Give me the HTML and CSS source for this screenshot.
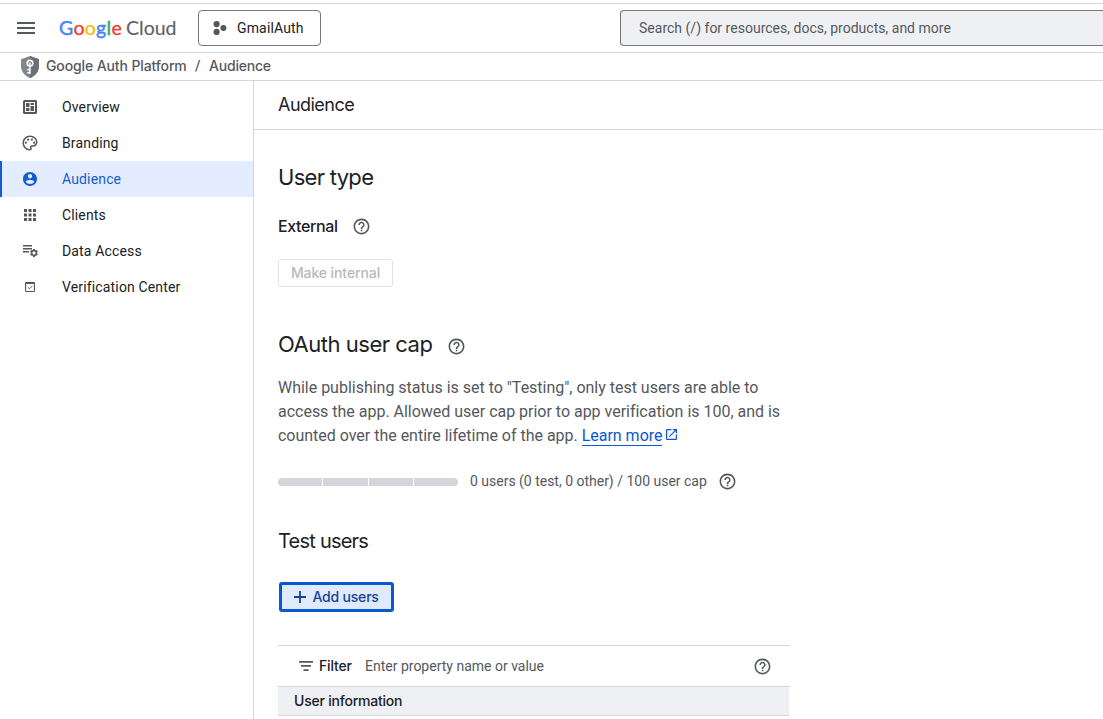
FILE: index.html
```html
<!DOCTYPE html>
<html lang="en">
<head>
<meta charset="utf-8">
<title>Audience – Google Auth Platform</title>
<link rel="stylesheet" href="styles.css">
</head>
<body>
<svg class="defs" width="0" height="0" aria-hidden="true">
  <symbol id="help" viewBox="0 0 24 24"><path d="M11 18h2v-2h-2v2zm1-16C6.48 2 2 6.48 2 12s4.48 10 10 10 10-4.48 10-10S17.52 2 12 2zm0 18c-4.41 0-8-3.59-8-8s3.59-8 8-8 8 3.59 8 8-3.59 8-8 8zm0-14c-2.21 0-4 1.79-4 4h2c0-1.1.9-2 2-2s2 .9 2 2c0 2-3 1.75-3 5h2c0-2.25 3-2.5 3-5 0-2.21-1.79-4-4-4z"/></symbol>
</svg>
<header class="topbar">
  <svg class="menu" viewBox="0 0 18 12"><path d="M0 0h18v2H0zM0 5h18v2H0zM0 10h18v2H0z"/></svg>
  <div class="logo"><span class="google"><span class="blue">G</span><span class="red">o</span><span class="yellow">o</span><span class="blue">g</span><span class="green">l</span><span class="red">e</span></span><span class="cloud">Cloud</span></div>
  <button class="project"><svg viewBox="0 0 14 14"><circle cx="3.6" cy="3.1" r="3.1"/><circle cx="3.6" cy="10.9" r="3.1"/><circle cx="10.4" cy="7" r="3"/></svg><span>GmailAuth</span></button>
  <div class="search"><span>Search (/) for resources, docs, products, and more</span></div>
</header>
<nav class="crumbs">
  <svg class="shield" viewBox="0 0 18 22"><path fill="#80868b" d="M9 0 18 3.3V10c0 5.4-3.7 10-9 12-5.3-2-9-6.6-9-12V3.3z"/><path fill="#6a7075" d="M9 0 18 3.3V10c0 5.4-3.7 10-9 12z"/><circle cx="9" cy="7.2" r="2.8" fill="none" stroke="#fff" stroke-width="1.6"/><path fill="#fff" d="M8.3 6.5h1.4V18H8.3zM6.3 13h2.5v1.4H6.3zM6.3 15.9h2.5v1.5H6.3z"/></svg>
  <span class="crumb-product">Google Auth Platform</span><span class="slash">/</span><span class="crumb-page">Audience</span>
</nav>
<div class="shell">
  <aside class="sidebar">
    <a class="item"><svg viewBox="0 0 16 16"><path fill-rule="evenodd" d="M2.5 1h11A1.5 1.5 0 0 1 15 2.5v11a1.5 1.5 0 0 1-1.5 1.5h-11A1.5 1.5 0 0 1 1 13.500v-11A1.500 1.500 0 0 1 2.500 1zM3 3v10h10V3z"/><path d="M4 4h3.500v4H4zM8.500 4H12v2H8.500zM8.500 7H12v5H8.500zM4 9h3.500v3H4z"/></svg>Overview</a>
    <a class="item"><svg viewBox="1.300 1.300 21.400 21.400"><path d="M12 22C6.490 22 2 17.510 2 12S6.490 2 12 2s10 4.040 10 9c0 3.310-2.690 6-6 6h-1.770c-.28 0-.5.22-.5.5 0 .12.05.23.13.33.41.47.64 1.060.64 1.670A2.500 2.500 0 0 1 12 22zm0-18c-4.410 0-8 3.590-8 8s3.590 8 8 8c.28 0 .5-.22.5-.5a.54.54 0 0 0-.14-.35c-.41-.46-.63-1.050-.63-1.650a2.500 2.500 0 0 1 2.500-2.500H16c2.210 0 4-1.790 4-4 0-3.860-3.590-7-8-7z"/><circle cx="6.500" cy="11.500" r="1.500"/><circle cx="9.500" cy="7.500" r="1.500"/><circle cx="14.500" cy="7.500" r="1.500"/><circle cx="17.500" cy="11.500" r="1.500"/></svg>Branding</a>
    <a class="item active"><svg viewBox="0.600 0.600 22.800 22.800"><path d="M12 2C6.480 2 2 6.480 2 12s4.480 10 10 10 10-4.480 10-10S17.520 2 12 2zm0 3c1.660 0 3 1.340 3 3s-1.340 3-3 3-3-1.340-3-3 1.340-3 3-3zm0 14.200c-2.500 0-4.710-1.280-6-3.220.03-1.990 4-3.080 6-3.080 1.990 0 5.970 1.090 6 3.080-1.290 1.940-3.500 3.220-6 3.220z"/></svg>Audience</a>
    <a class="item"><svg viewBox="0 0 16 16"><path d="M2 2h3v3H2zM6.500 2h3v3h-3zM11 2h3v3h-3zM2 6.500h3v3H2zM6.500 6.500h3v3h-3zM11 6.500h3v3h-3zM2 11h3v3H2zM6.500 11h3v3h-3zM11 11h3v3h-3z"/></svg>Clients</a>
    <a class="item"><svg viewBox="0 0 16 16"><path d="M1 2h9v1.500H1zM1 5h9v1.500H1zM1 8h6v1.500H1z"/><circle cx="12" cy="9.900" r="2.400" fill="none" stroke="#54585d" stroke-width="1.700"/><path fill="none" stroke="#54585d" stroke-width="1.900" d="M12 5.900v1.400M12 12.500v1.400M8.600 7.900l1.100.6M14.300 11.300l1.100.6M8.600 11.900l1.100-.6M14.300 8.500l1.100-.6"/></svg>Data Access</a>
    <a class="item"><svg viewBox="0 0 16 16"><path fill-rule="evenodd" d="M4 3h8a1 1 0 0 1 1 1v8a1 1 0 0 1-1 1H4a1 1 0 0 1-1-1V4a1 1 0 0 1 1-1zM4.100 5v6.900h7.800V5z"/><path fill="none" stroke="#54585d" d="m5.800 8.300 1.600 1.500L10.400 6.800"/></svg>Verification Center</a>
  </aside>
  <main class="main">
    <h1 class="page-title"><span>Audience</span></h1>
    <section class="content">
      <h2 class="user-type"><span>User type</span></h2>
      <div class="external"><span>External</span><svg class="help"><use href="#help"/></svg></div>
      <button class="internal" disabled><span>Make internal</span></button>
      <h2 class="cap"><span>OAuth user cap</span><svg class="help"><use href="#help"/></svg></h2>
      <p class="copy">While publishing status is set to "Testing", only test users are able to<br>access the app. Allowed user cap prior to app verification is 100, and is<br>counted over the entire lifetime of the app. <a class="learn">Learn more</a><svg class="ext" viewBox="3 3 18 18"><path d="M19 19H5V5h7V3H5a2 2 0 0 0-2 2v14a2 2 0 0 0 2 2h14c1.100 0 2-.9 2-2v-7h-2v7zM14 3v2h3.590l-9.830 9.830 1.410 1.410L19 6.410V10h2V3h-7z"/></svg></p>
      <div class="usage"><div class="meter"><i></i><i></i><i></i><i></i></div><span>0 users (0 test, 0 other) / 100 user cap</span><svg class="help"><use href="#help"/></svg></div>
      <h3 class="test"><span>Test users</span></h3>
      <button class="add"><svg viewBox="0 0 12 12"><path d="M5.100 0h1.800v5.100H12v1.800H6.900V12H5.100V6.900H0V5.100h5.100z"/></svg><span>Add users</span></button>
      <div class="table">
        <div class="filter"><svg class="filter-icon" viewBox="0 0 14 10"><path d="M0 0h14v1.700H0zM2 4.100h10v1.700H2zM4.500 8.200h5v1.700h-5z"/></svg><span class="filter-label">Filter</span><span class="hint">Enter property name or value</span><svg class="help"><use href="#help"/></svg></div>
        <div class="thead"><span>User information</span></div>
      </div>
    </section>
  </main>
</div>
</body>
</html>
```
FILE: styles.css
```css
* { box-sizing: border-box; }
body { margin: 0; height: 719px; overflow: hidden; background: #fff; color: #202124; font: 14px/20px Roboto, sans-serif; }
svg { display: block; flex: none; fill: #54585d; }
h1, h2, h3, p { margin: 0; font-weight: 400; }
button { margin: 0; font: inherit; }
.defs { display: none; }
.topbar { margin-top: 3px; height: 50px; border-top: 1px solid #d5d6dc; border-bottom: 1px solid #d5d6dc; display: flex; align-items: center; padding-left: 17px; overflow: hidden; }
.menu { width: 18px; height: 12px; margin-right: 24px; }
.logo { width: 139px; display: flex; gap: 5px; font: 19.5px/28px Lato, sans-serif; color: #5f6368; white-space: nowrap; }
.google { width: 63px; font-weight: 400; letter-spacing: .3px; -webkit-text-stroke: .4px currentColor; }
.cloud { margin-left: -1px; -webkit-text-stroke: .15px currentColor; }
.blue { color: #4285f4; }
.red { color: #ea4335; }
.yellow { color: #fbbc04; }
.green { color: #34a853; }
.project { width: 123px; height: 36px; border: 1px solid #74777f; border-radius: 4px; background: #fff; color: #202124; display: flex; align-items: center; gap: 10px; padding: 0 0 0 14px; letter-spacing: .15px; }
.project svg { width: 14px; height: 14px; }
.search { margin-left: 299px; flex: 1; height: 36px; border: 1px solid #74777f; border-right: 0; border-radius: 4px 0 0 4px; background: #eff0f3; color: #54585d; display: flex; align-items: center; padding-left: 18px; letter-spacing: .01px; white-space: nowrap; }
.crumbs { height: 28px; border-bottom: 1px solid #d5d6dc; display: flex; align-items: center; padding: 0 0 2px 21px; color: #54585d; font: 500 14px/20px Inter, sans-serif; }
.shield { width: 18px; height: 22px; margin: 2px 7px 0 0; }
.crumb-product { width: 149px; letter-spacing: -.12px; }
.slash { width: 14px; font-family: Roboto, sans-serif; }
.crumb-page { letter-spacing: -.2px; }
.shell { display: flex; height: 638px; }
.sidebar { width: 254px; flex: none; border-right: 1px solid #d5d6dc; padding-top: 8px; }
.item { display: flex; align-items: center; height: 36px; padding-left: 22px; gap: 24px; letter-spacing: .15px; }
.item svg { width: 16px; height: 16px; }
.active { background: #e4edff; color: #175bd2; border-left: 2px solid #175bd2; padding-left: 20px; }
.active svg { fill: #175bd2; }
.main { flex: 1; font-family: Roboto, sans-serif; }
.page-title { height: 49px; border-bottom: 1px solid #d5d6dc; padding: 12px 24px; font: 400 18px/24px Inter, sans-serif; letter-spacing: -.53px; }
.content { width: 536px; padding: 31px 0 0 24px; }
.help { width: 19px; height: 19px; }
.user-type { height: 32px; font: 400 22px/32px Inter, sans-serif; letter-spacing: -.7px; }
.external { margin-top: 20px; height: 26px; display: flex; align-items: center; gap: 14px; font: 500 16px/26px Inter, sans-serif; letter-spacing: -.38px; }
.internal { display: block; margin-top: 20px; width: 115px; height: 28px; padding: 0; border: 1px solid #e3e3e3; border-radius: 3px; background: #fff; color: #b8b9bb; font: 500 14px/26px Inter, sans-serif; letter-spacing: -.1px; }
.cap { margin-top: 41px; height: 32px; display: flex; align-items: center; gap: 15px; font: 400 22px/32px Inter, sans-serif; letter-spacing: -.48px; }
.cap .help { margin-top: 5px; }
.copy { margin-top: 16px; font-size: 16px; line-height: 24px; color: #54585d; letter-spacing: -.015px; white-space: nowrap; }
.learn { color: #0b57d0; border-bottom: 1px solid #0b57d0; }
.ext { display: inline-block; width: 11px; height: 11px; margin-left: 4px; fill: #0b57d0; vertical-align: 1px; }
.usage { margin-top: 23px; height: 20px; display: flex; align-items: center; color: #54585d; letter-spacing: -.01px; }
.meter { width: 180px; height: 8px; margin: 2px 12px 0 0; display: flex; gap: 1px; border-radius: 4px; overflow: hidden; }
.meter i { flex: 1; background: #d5d6dc; }
.usage span { width: 247.5px; white-space: nowrap; }
.test { margin-top: 36px; height: 28px; font: 400 20px/28px Inter, sans-serif; letter-spacing: -.77px; }
.add { margin: 27px 0 0 1px; width: 115px; height: 30px; padding: 0 0 0 12px; border: 3px solid #0b57d0; border-radius: 3px; background: #dfebfa; color: #174298; display: flex; align-items: center; gap: 6.5px; font: 500 14px/24px Inter, sans-serif; letter-spacing: -.2px; white-space: nowrap; }
.add svg { width: 12px; height: 12px; fill: #174298; }
.table { margin-top: 33px; border-top: 1px solid #d5d6dc; }
.filter { height: 41px; border-bottom: 1px solid #d5d6dc; display: flex; align-items: center; padding-left: 21px; }
.filter-icon { width: 14px; height: 10px; margin-right: 6px; }
.filter-label { width: 46px; font: 500 14px/20px Inter, sans-serif; letter-spacing: -.15px; }
.hint { width: 387.5px; color: #54585d; }
.thead { width: 511px; height: 29px; border-bottom: 1px solid #d5d6dc; background: #eff0f3; padding-left: 16px; font: 500 14px/28px Inter, sans-serif; letter-spacing: -.22px; }
```
